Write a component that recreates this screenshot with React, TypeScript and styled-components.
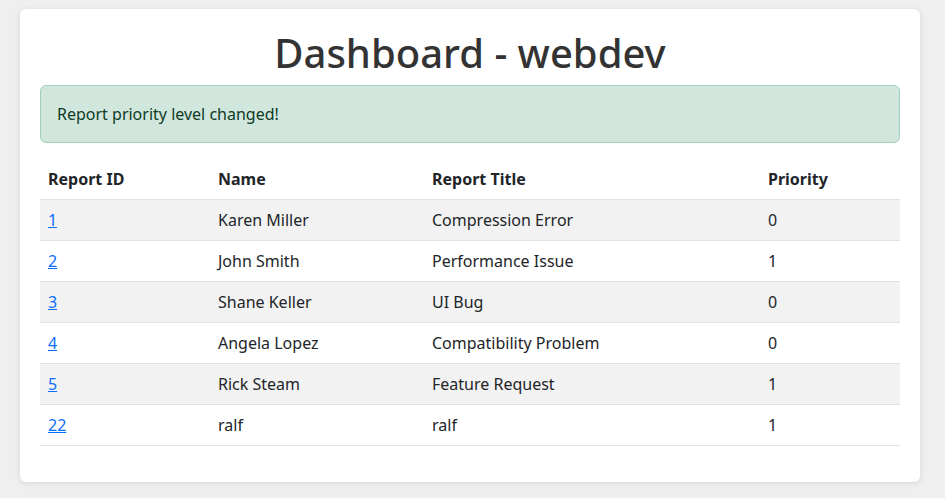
import React from "react";
import styled, { createGlobalStyle } from "styled-components";

const Global = createGlobalStyle`
  * { box-sizing: border-box; }
  html, body { margin: 0; padding: 0; }
  body {
    background: #efefef;
    font-family: "Noto Sans", "Open Sans", sans-serif;
    color: #212529;
    font-size: 16px;
    line-height: 1.5;
  }
`;

const Page = styled.div`
  padding: 9px 25px 16px 20px;
`;

const Card = styled.div`
  background: #fff;
  border-radius: 6px;
  box-shadow: 0 1px 6px rgba(0, 0, 0, 0.1);
  padding: 20px 20px 20px;
`;

const Title = styled.h1`
  margin: 0 0 8px;
  text-align: center;
  font-size: 40px;
  font-weight: 500;
  line-height: 48px;
  color: #333;
`;

const Alert = styled.div`
  background: #d1e7dd;
  border: 1px solid #a3cfbb;
  border-radius: 6px;
  color: #0f3a26;
  padding: 16px;
  margin-bottom: 16px;
  line-height: 24px;
`;

const Table = styled.table`
  width: 100%;
  border-collapse: collapse;
  margin-bottom: 16px;
`;

const Th = styled.th<{ $w: number }>`
  width: ${(p) => p.$w}px;
  text-align: left;
  font-weight: 700;
  padding: 8px;
  line-height: 24px;
  border-bottom: 1px solid #dee2e6;
  color: #212529;
`;

const Row = styled.tr<{ $striped: boolean }>`
  background: ${(p) => (p.$striped ? "#f2f2f2" : "#fff")};
`;

const Td = styled.td`
  padding: 8px;
  line-height: 24px;
  border-bottom: 1px solid #dee2e6;
  color: #212529;
`;

const IdLink = styled.a`
  color: #0d6efd;
  text-decoration: underline;
`;

const rows = [
  { id: 1, name: "Karen Miller", title: "Compression Error", priority: 0 },
  { id: 2, name: "John Smith", title: "Performance Issue", priority: 1 },
  { id: 3, name: "Shane Keller", title: "UI Bug", priority: 0 },
  { id: 4, name: "Angela Lopez", title: "Compatibility Problem", priority: 0 },
  { id: 5, name: "Rick Steam", title: "Feature Request", priority: 1 },
  { id: 22, name: "ralf", title: "ralf", priority: 1 },
];

export default function App() {
  return (
    <>
      <Global />
      <Page>
        <Card>
          <Title>Dashboard - webdev</Title>
          <Alert>Report priority level changed!</Alert>
          <Table>
            <thead>
              <tr>
                <Th $w={170}>Report ID</Th>
                <Th $w={214}>Name</Th>
                <Th $w={336}>Report Title</Th>
                <Th $w={140}>Priority</Th>
              </tr>
            </thead>
            <tbody>
              {rows.map((r, i) => (
                <Row key={r.id} $striped={i % 2 === 0}>
                  <Td>
                    <IdLink href="#">{r.id}</IdLink>
                  </Td>
                  <Td>{r.name}</Td>
                  <Td>{r.title}</Td>
                  <Td>{r.priority}</Td>
                </Row>
              ))}
            </tbody>
          </Table>
        </Card>
      </Page>
    </>
  );
}
